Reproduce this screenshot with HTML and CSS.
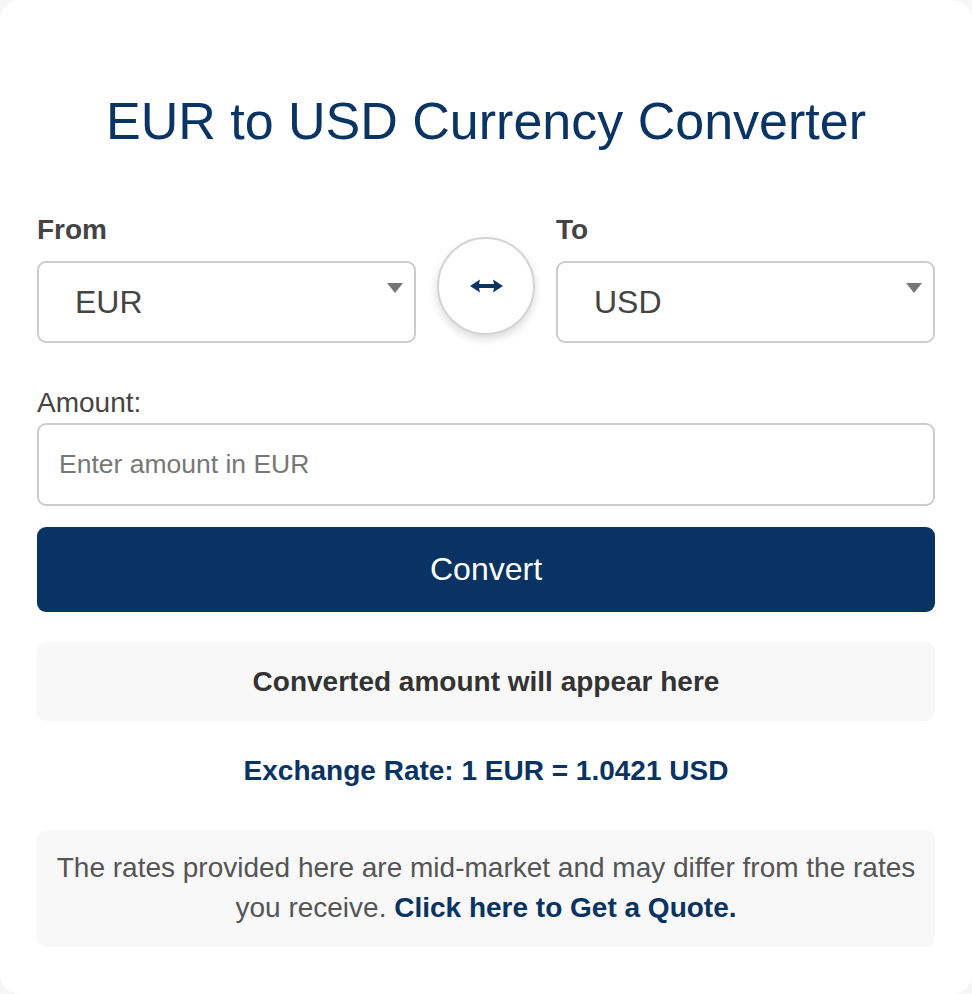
FILE: index.html
```html
<!DOCTYPE html>
<html lang="en">
<head>
<meta charset="utf-8">
<title>EUR to USD Currency Converter</title>
<link rel="stylesheet" href="styles.css">
</head>
<body>
<div class="card">
  <h1 class="title">EUR to USD Currency Converter</h1>
  <div class="pair">
    <div class="col">
      <label class="label">From</label>
      <div class="select-wrap">
        <select class="select"><option>EUR</option></select>
      </div>
    </div>
    <button class="swap" type="button" aria-label="Swap">
      <svg width="33" height="14" viewBox="0 0 33 14"><path d="M0 7 L10 0.5 L9 5 L24 5 L23 0.5 L33 7 L23 13.5 L24 9 L9 9 L10 13.5 Z" fill="#0a3463"/></svg>
    </button>
    <div class="col">
      <label class="label">To</label>
      <div class="select-wrap">
        <select class="select"><option>USD</option></select>
      </div>
    </div>
  </div>
  <label class="amount-label">Amount:</label>
  <input class="amount" type="text" placeholder="Enter amount in EUR">
  <button class="convert" type="button">Convert</button>
  <div class="result">Converted amount will appear here</div>
  <div class="rate">Exchange Rate: 1 EUR = 1.0421 USD</div>
  <div class="note">The rates provided here are mid-market and may differ from the rates you receive. <a class="quote" href="#">Click here to Get a Quote.</a></div>
</div>
</body>
</html>
```
FILE: styles.css
```css
html, body {
  margin: 0;
  padding: 0;
  background: #f6f6f6;
}
body {
  font-family: "Liberation Sans", Arial, Helvetica, sans-serif;
}
.card {
  box-sizing: border-box;
  width: 972px;
  height: 994px;
  background: #ffffff;
  border-radius: 20px;
  padding: 91px 37px 0;
  display: flex;
  flex-direction: column;
}
.title {
  margin: 0;
  font-size: 52px;
  line-height: 60px;
  font-weight: normal;
  color: #0a3463;
  text-align: center;
}
.pair {
  margin-top: 63px;
  display: flex;
  align-items: flex-end;
  gap: 21px;
}
.col {
  flex: 1;
  display: flex;
  flex-direction: column;
}
.label {
  font-size: 28px;
  line-height: 32px;
  font-weight: bold;
  color: #444444;
  margin-bottom: 15px;
}
.select-wrap {
  position: relative;
}
.select-wrap::after {
  content: "";
  position: absolute;
  right: 13px;
  top: 22px;
  width: 0;
  height: 0;
  border-left: 8px solid transparent;
  border-right: 8px solid transparent;
  border-top: 10px solid #777777;
  pointer-events: none;
}
.select {
  -webkit-appearance: none;
  appearance: none;
  box-sizing: border-box;
  width: 100%;
  height: 82px;
  border: 2px solid #cccccc;
  border-radius: 9px;
  background: #ffffff;
  padding: 0 0 0 36px;
  font-family: inherit;
  font-size: 32px;
  color: #444444;
}
.swap {
  box-sizing: border-box;
  flex: 0 0 98px;
  width: 98px;
  height: 98px;
  margin-bottom: 8px;
  border-radius: 50%;
  border: 2px solid #d4d4d4;
  background: #ffffff;
  box-shadow: 0 4px 8px rgba(0, 0, 0, 0.14);
  display: flex;
  align-items: center;
  justify-content: center;
  padding: 0;
}
.amount-label {
  margin-top: 44px;
  font-size: 28px;
  line-height: 32px;
  color: #444444;
}
.amount {
  box-sizing: border-box;
  margin-top: 4px;
  width: 100%;
  height: 83px;
  border: 2px solid #cccccc;
  border-radius: 9px;
  padding: 0 0 0 20px;
  font-family: inherit;
  font-size: 26.5px;
  color: #444444;
  outline: none;
}
.amount::placeholder {
  color: #777777;
}
.convert {
  margin-top: 21px;
  height: 85px;
  width: 100%;
  border: none;
  border-radius: 9px;
  background: #083362;
  color: #ffffff;
  font-family: inherit;
  font-size: 32px;
}
.result {
  margin-top: 30px;
  height: 79px;
  border-radius: 9px;
  background: #f8f8f8;
  display: flex;
  align-items: center;
  justify-content: center;
  font-size: 28px;
  font-weight: bold;
  color: #333333;
}
.rate {
  margin-top: 30px;
  line-height: 40px;
  text-align: center;
  font-size: 28px;
  font-weight: bold;
  color: #083362;
}
.note {
  box-sizing: border-box;
  margin-top: 39px;
  height: 117px;
  border-radius: 9px;
  background: #f8f8f8;
  padding: 18px 12px 0;
  text-align: center;
  font-size: 28px;
  line-height: 40px;
  color: #555555;
}
.quote {
  color: #083362;
  font-weight: bold;
  text-decoration: none;
}
```
